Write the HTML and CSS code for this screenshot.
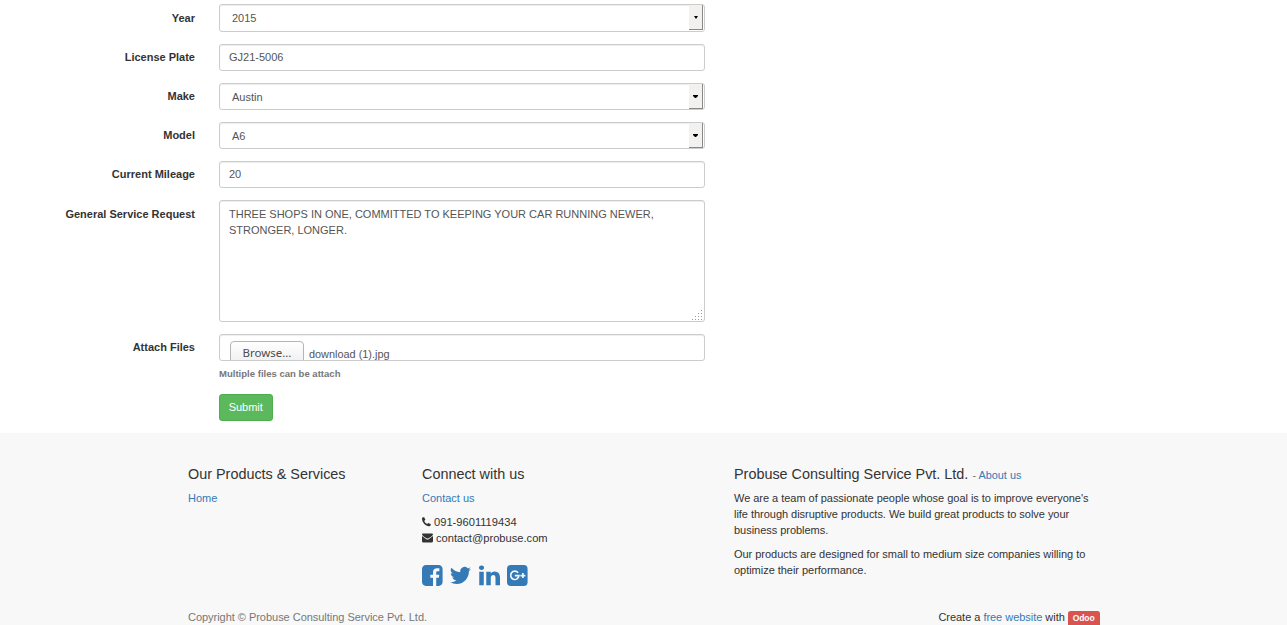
FILE: index.html
```html
<!DOCTYPE html>
<html lang="en">
<head>
<meta charset="utf-8">
<title>Service Request</title>
<link rel="stylesheet" href="styles.css">
</head>
<body>
<main class="request-form">
  <div class="row"><label class="label">Year</label><div class="control select year"><span>2015</span><i class="arrow"><svg width="4" height="3" viewBox="0 0 4 3"><path d="M0 0h4L2 3z"/></svg></i></div></div>
  <div class="row"><label class="label">License Plate</label><div class="control">GJ21-5006</div></div>
  <div class="row"><label class="label">Make</label><div class="control select"><span>Austin</span><i class="arrow"><svg width="5" height="3" viewBox="0 0 5 3"><path d="M0 0h5v1L3 3H2L0 1z"/></svg></i></div></div>
  <div class="row"><label class="label">Model</label><div class="control select"><span>A6</span><i class="arrow"><svg width="5" height="3" viewBox="0 0 5 3"><path d="M0 0h5v1L3 3H2L0 1z"/></svg></i></div></div>
  <div class="row"><label class="label">Current Mileage</label><div class="control">20</div></div>
  <div class="row"><label class="label">General Service Request</label><div class="control textarea">THREE SHOPS IN ONE, COMMITTED TO KEEPING YOUR CAR RUNNING NEWER,<br>STRONGER, LONGER.<svg class="grip" width="10" height="10" viewBox="0 0 10 10"><path d="M9 0h1v1H9zM6 3h1v1H6zM9 3h1v1H9zM3 6h1v1H3zM6 6h1v1H6zM9 6h1v1H9zM0 9h1v1H0zM3 9h1v1H3zM6 9h1v1H6zM9 9h1v1H9z"/></svg></div></div>
  <div class="row"><label class="label">Attach Files</label><div class="field"><div class="control file"><span class="browse">Browse…</span><span class="filename">download (1).jpg</span></div><div class="help">Multiple files can be attach</div></div></div>
  <div class="row actions"><button class="submit" type="button">Submit</button></div>
</main>
<footer class="footer">
  <div class="container">
    <div class="columns">
      <section class="col">
        <h4>Our Products &amp; Services</h4>
        <p><a href="#">Home</a></p>
      </section>
      <section class="col">
        <h4>Connect with us</h4>
        <p><a href="#">Contact us</a></p>
        <ul class="contacts">
          <li><svg width="9" height="16" viewBox="0 0 9 16"><path d="M0 4.2C.3 3.4 1.3 3 2.2 3.2L3.4 5.8 2.2 7.1Q3 9.2 5.1 10.1L6.4 8.9 8.9 10.2C8.9 11.4 8 12.3 6.7 12.3 3.4 12.2-.3 8.1 0 4.2z"/></svg><span>091-9601119434</span></li>
          <li><svg width="11" height="16" viewBox="0 0 11 16"><path d="M0 4.7Q0 3.5 1 3.5H10Q11 3.5 11 4.7Q10.500 5.700 6.500 8.300Q5.500 8.900 4.500 8.300Q.5 5.700 0 4.700zM0 6.100Q2 7.600 4 8.900Q5.500 9.900 7 8.900Q9 7.600 11 6.100V11.300Q11 12.400 10 12.400H1Q0 12.400 0 11.300z"/></svg><span>contact@probuse.com</span></li>
        </ul>
        <div class="social">
          <a href="#" aria-label="Facebook"><svg width="20.6" height="21" viewBox="0 0 1536 1536" preserveAspectRatio="none"><path d="M1248 0q119 0 203.500 84.500T1536 288v960q0 119-84.500 203.500T1248 1536h-188V941h199l30-232h-229V561q0-56 23.500-84t91.500-28l122-1V241q-63-9-178-9-136 0-217.500 80T820 538v171H620v232h200v595H288q-119 0-203.500-84.500T0 1248V288Q0 169 84.500 84.500T288 0z"/></svg></a>
          <a href="#" aria-label="Twitter"><svg width="21" height="21" viewBox="0 0 24 24" preserveAspectRatio="none"><path d="M23.950 4.570a10 10 0 0 1-2.820.770 4.950 4.950 0 0 0 2.160-2.720 9.900 9.900 0 0 1-3.120 1.180 4.920 4.920 0 0 0-8.390 4.490A14 14 0 0 1 1.640 3.160a4.920 4.920 0 0 0 1.520 6.570 4.900 4.900 0 0 1-2.230-.610v.060a4.920 4.920 0 0 0 3.950 4.830 5 5 0 0 1-2.210.080 4.940 4.940 0 0 0 4.600 3.420A9.870 9.870 0 0 1 0 19.540a14 14 0 0 0 7.550 2.210c9.050 0 14-7.500 14-13.990 0-.210 0-.420-.020-.630a9.900 9.900 0 0 0 2.420-2.560z"/></svg></a>
          <a href="#" aria-label="LinkedIn"><svg width="21" height="21" viewBox="0 60 1536 1556" preserveAspectRatio="none"><path d="M349 565v991H19V565zm21-306q1 73-50.500 122T184 430h-2q-82 0-132-49T0 259q0-74 51.500-122.500T186 88t133 48.500T370 259zm1166 729v568h-329v-530q0-105-40.500-164.500T1040 802q-63 0-105.500 34.500T871 922q-11 30-11 81v553H531q2-399 2-647t-1-296l-1-48h329v144h-2q20-32 41-56t56.500-52 87-43.500T1157 542q171 0 275 113.500T1536 988z"/></svg></a>
          <a href="#" aria-label="Google Plus"><svg width="20.6" height="21" viewBox="0 0 21 21" preserveAspectRatio="none"><rect width="21" height="21" rx="4"/><path class="mark" d="M11.300 7.700A4.200 4.200 0 1 0 12.150 10.700H8M16.200 8.100V13.100M13.700 10.600H18.700"/></svg></a>
        </div>
      </section>
      <section class="col about">
        <h4>Probuse Consulting Service Pvt. Ltd. <small>- <a href="#">About us</a></small></h4>
        <p>We are a team of passionate people whose goal is to improve everyone's<br>life through disruptive products. We build great products to solve your<br>business problems.</p>
        <p>Our products are designed for small to medium size companies willing to<br>optimize their performance.</p>
      </section>
    </div>
    <div class="bottom">
      <span class="copyright">Copyright © Probuse Consulting Service Pvt. Ltd.</span>
      <span class="credit">Create a <a href="#">free website</a> with <b class="badge">Odoo</b></span>
    </div>
  </div>
</footer>
</body>
</html>
```
FILE: styles.css
```css
* { box-sizing: border-box; }
html, body { height: 100%; }
body {
  margin: 0;
  height: 625px;
  overflow: hidden;
  display: flex;
  flex-direction: column;
  font-family: "Liberation Sans", Arial, sans-serif;
  font-size: 11px;
  line-height: 16px;
  color: #333;
  background: #fff;
}
a { color: #337ab7; text-decoration: none; }
.request-form {
  flex: none;
  height: 433px;
  padding-top: 4.4px;
  display: flex;
  flex-direction: column;
  gap: 12px;
}
.row { display: flex; align-items: flex-start; }
.label {
  flex: none;
  width: 195px;
  margin-right: 23.5px;
  padding-top: 5.2px;
  font-weight: bold;
  text-align: right;
}
.control {
  position: relative;
  width: 486px;
  height: 27.2px;
  padding: 4.1px 9.5px;
  border: 1px solid #ccc;
  border-radius: 3px;
  background: #fff;
  box-shadow: inset 0 1px 1px rgba(0, 0, 0, .075);
  color: #555;
  overflow: hidden;
}
.select {
  display: flex;
  justify-content: space-between;
  padding: 0 .5px 0 12.5px;
}
.select span { padding-top: 5.2px; }
.year span { padding-top: 4.4px; }
.arrow {
  width: 14.5px;
  height: 25px;
  padding: 1px 0 0 1px;
  display: flex;
  align-items: center;
  justify-content: center;
  background: #f2f1f0;
  border-right: 1px solid #888;
  border-bottom: 1px solid #888;
}
.arrow svg { fill: #000; }
.textarea { height: 121.6px; padding-top: 4.4px; }
.grip { position: absolute; right: 2px; bottom: 1px; fill: #999; }
.file { display: flex; padding: 6px 10.5px 0; }
.browse {
  flex: none;
  width: 74px;
  height: 26px;
  padding-top: 3px;
  border: 1px solid #b5b5b5;
  border-radius: 4px;
  background: linear-gradient(#fff, #ededed);
  font-family: "Noto Sans", "Open Sans", sans-serif;
  font-size: 11.5px;
  text-align: center;
  color: #4c4c4c;
}
.filename { margin-left: 5px; padding-top: 5px; font-size: 10.9px; }
.help {
  margin: 5px 0 0 .5px;
  height: 15.5px;
  font-size: 9.55px;
  font-weight: bold;
  color: #777;
}
.actions { padding-left: 218.5px; }
.submit {
  width: 54.5px;
  height: 27.2px;
  padding: 0;
  border: 1px solid #4cae4c;
  border-radius: 3px;
  background: #5cb85c;
  font: inherit;
  color: #fff;
}
.footer { flex: 1; background: #f8f8f8; }
.container { width: 936px; margin: 0 auto; padding: 0 12px; }
.columns {
  display: grid;
  grid-template-columns: 234px 312px 366px;
  padding: 33px 0 0 .5px;
  height: 176px;
}
h4 {
  margin: 0 0 7px;
  height: 17px;
  font-size: 14.4px;
  font-weight: normal;
  line-height: 17px;
}
h4 small { font-size: 10.9px; line-height: 1; color: #777; }
p { margin: 0 0 8px; }
.col { white-space: nowrap; }
.about p { letter-spacing: -.03px; }
.contacts { list-style: none; margin: 0; padding: 0; font-size: 11.15px; }
.contacts li { display: flex; gap: 3px; }
.contacts svg { fill: #333; }
.social { display: flex; gap: 7.6px; margin-top: 19px; }
.social svg { display: block; fill: #337ab7; }
.social .mark { fill: none; stroke: #f8f8f8; stroke-width: 1.7; }
.bottom { display: flex; justify-content: space-between; padding-left: .5px; letter-spacing: -.03px; }
.copyright { color: #777; }
.badge {
  display: inline-block;
  padding: 0 4.8px;
  height: 16px;
  border-radius: 2.5px;
  background: #d9534f;
  color: #fff;
  font-size: 8.5px;
  line-height: 14px;
  vertical-align: top;
  margin-top: 2px;
}
```
